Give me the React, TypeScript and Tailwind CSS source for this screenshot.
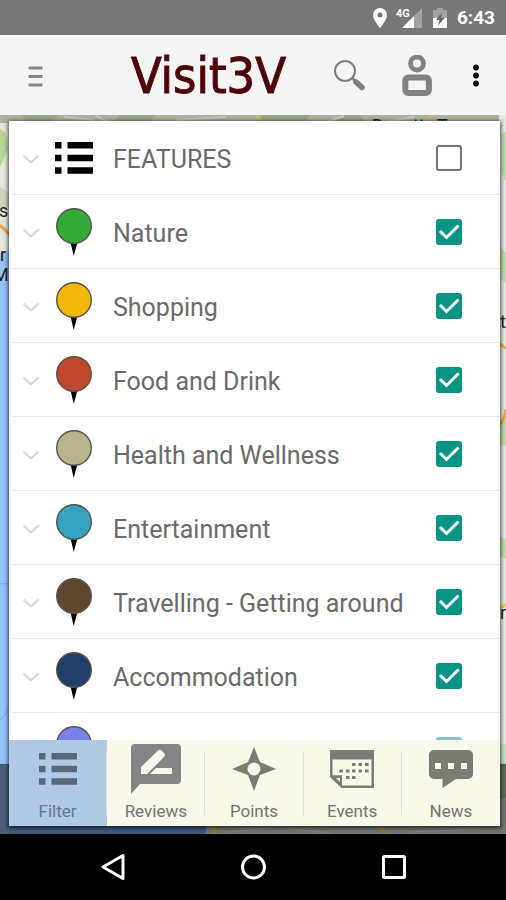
import { useState } from 'react';

type Category = {
  id: string;
  name: string;
  color?: string;
};

const categories: Category[] = [
  { id: 'features', name: 'FEATURES' },
  { id: 'nature', name: 'Nature', color: '#33a937' },
  { id: 'shopping', name: 'Shopping', color: '#f3b70c' },
  { id: 'food', name: 'Food and Drink', color: '#c0462d' },
  { id: 'health', name: 'Health and Wellness', color: '#b9b28f' },
  { id: 'entertainment', name: 'Entertainment', color: '#33a3c0' },
  { id: 'travelling', name: 'Travelling - Getting around', color: '#5f472d' },
  { id: 'accommodation', name: 'Accommodation', color: '#203e68' },
  { id: 'events', name: 'Events', color: '#7a80ea' },
];

const tabs = ['Filter', 'Reviews', 'Points', 'Events', 'News'];

function StatusBar() {
  return (
    <div className="flex h-9 shrink-0 items-center justify-end border-b border-white bg-[#777777] pr-[11px] text-white">
      <svg width="16" height="22" viewBox="0 0 16 22" className="mr-2">
        <path
          fillRule="evenodd"
          fill="#fff"
          d="M8 1a7 7 0 0 0-7 7c0 5 7 13 7 13s7-8 7-13a7 7 0 0 0-7-7zm0 4.5a2.5 2.5 0 1 1 0 5 2.5 2.5 0 0 1 0-5z"
        />
      </svg>
      <svg width="26" height="22" viewBox="0 0 26 22" className="mr-[10px]">
        <path d="M26 1V21H6z" fill="#a3a3a3" />
        <path d="M18 9V21H6z" fill="#fff" />
        <text x="0" y="10" fontSize="11" fontWeight="700" fill="#fff" fontFamily="Roboto, sans-serif">
          4G
        </text>
      </svg>
      <svg width="16" height="22" viewBox="0 0 16 22" className="mr-[9px]">
        <path d="M1 3h4V1h6v2h4v9H1z" fill="#a3a3a3" />
        <path d="M1 11h14v10H1z" fill="#fff" />
        <path d="M10.500 5L4 13h3.500L6 18.500 12.500 11H9z" fill="#666" />
      </svg>
      <span className="text-[19px] leading-6 font-bold">6:43</span>
    </div>
  );
}

function Header() {
  return (
    <header className="flex h-[79px] shrink-0 items-center gap-9 bg-[#f5f5f5] pr-[22px] pl-7">
      <button aria-label="Menu">
        <svg width="16" height="22" viewBox="0 0 16 22" fill="#858585">
          <path d="M0.500 1.500h14v3h-14zM0.500 10h14v3h-14zM0.500 18.500h14v3h-14z" />
        </svg>
      </button>
      <h1 className="mr-3 ml-auto font-['DejaVu_Sans_Condensed','DejaVu_Sans',sans-serif] text-[50px] leading-[60px] text-[#4f0507] [-webkit-text-stroke:1px_#4f0507]">
        Visit3V
      </h1>
      <button aria-label="Search">
        <svg width="32" height="32" viewBox="0 0 32 32" fill="none" stroke="#7d7d7d">
          <circle cx="11" cy="11" r="10" strokeWidth="2" />
          <path d="M18 18l5 5" strokeWidth="2.500" />
          <path d="M22 22l6 5.500" strokeWidth="5.500" strokeLinecap="round" />
        </svg>
      </button>
      <button aria-label="Profile">
        <svg width="30" height="42" viewBox="0 0 30 42" fill="none" stroke="#828282">
          <circle cx="15" cy="8.500" r="6.500" strokeWidth="4.800" />
          <rect x="3.300" y="22.500" width="23.600" height="15.400" rx="3" strokeWidth="6" />
        </svg>
      </button>
      <button aria-label="More options">
        <svg width="16" height="24" viewBox="0 0 16 24" fill="#000">
          <circle cx="8" cy="3.500" r="2.900" />
          <circle cx="8" cy="11.500" r="2.900" />
          <circle cx="8" cy="19.500" r="2.900" />
        </svg>
      </button>
    </header>
  );
}

function MapBackground() {
  return (
    <svg
      className="absolute inset-0 h-full w-full"
      viewBox="0 0 506 718"
      preserveAspectRatio="none"
      fontFamily="Roboto, sans-serif"
      fill="#222"
    >
      <rect width="506" height="718" fill="#dfe3d3" />
      {/* hills along the top */}
      <rect width="506" height="8" fill="#adb5a0" />
      <path d="M20 0h40l-12 8H30zM120 0h36l-8 8h-36zM260 0h50l-6 8h-40zM340 0h20l6 8h-30z" fill="#98a98a" />
      <path d="M64 2l30 3M96 1l12 6M176 5l50-3M326 7l18-6M384 7l30-5" stroke="#c9cdbf" strokeWidth="2" />
      <path d="M256 2h4M428 2h5" stroke="#d8b85a" strokeWidth="3" />
      {/* west coast */}
      <path d="M0 8h10v128H0z" fill="#e4e7da" />
      <path d="M0 14l6 4 2 16-8 18z" fill="#b4d795" />
      <path d="M0 72l10 6v14H0z" fill="#cdd6bd" />
      <path d="M0 110l10 10" stroke="#f0a14c" strokeWidth="3" />
      <path d="M0 138l10-3v514H0z" fill="#94c4fb" />
      <path d="M0 468h10M0 604q6-4 8-14" stroke="#7eabf0" fill="none" />
      {/* east side */}
      <path d="M499 0h7v648h-7z" fill="#e6e9df" />
      <path d="M501 20l5-4v50l-5-8zM499 130l7 8v30l-7-6zM499 305l7-5v30h-7zM499 420l7 4v20l-7-4z" fill="#bfdcad" />
      <path d="M499 228l7 5M499 310q6-6 7-16" stroke="#eda94d" strokeWidth="3" fill="none" />
      <path d="M499 493l7-4" stroke="#edcc55" strokeWidth="3" />
      <path d="M499 628h7v20h-7z" fill="#c5e3c4" />
      {/* dimmed strip under the panel */}
      <rect y="648" width="206" height="70" fill="#4c5e76" />
      <rect y="710" x="10" width="196" height="8" fill="#3f5a80" />
      <rect x="206" y="648" width="300" height="70" fill="#74736f" />
      <path d="M499 648h7v35h-7z" fill="#5b6a59" />
      <path d="M213 710l2 8M380 711l5 7" stroke="#9a7a25" strokeWidth="3" />
      <path d="M230 716l40-4M290 713l40 4M410 716l70-3" stroke="#86857f" />
      <text x="-1" y="102" fontSize="18">s</text>
      <text x="0" y="146" fontSize="18">r</text>
      <text x="-7" y="166" fontSize="18">Ma</text>
      <text x="500" y="213" fontSize="18">t</text>
      <text x="500" y="503" fontSize="18">n</text>
      <text x="372" y="17" fontSize="18">D</text>
      <text x="413" y="17" fontSize="18">tt</text>
      <text x="437" y="17" fontSize="18">T</text>
    </svg>
  );
}

function ListIcon({ color }: { color: string }) {
  return (
    <svg width="40" height="34" viewBox="0 0 40 34" fill={color}>
      <path d="M1 1h6.500v6.500H1zM13.500 1H39v6.500H13.500zM1 13.700h6.500v6.500H1zM13.500 13.700H39v6.500H13.500zM1 26.300h6.500v6.500H1zM13.500 26.300H39v6.500H13.500z" />
    </svg>
  );
}

function Pin({ color }: { color: string }) {
  return (
    <svg width="40" height="48" viewBox="0 0 40 48">
      <path d="M16.500 34h7L19.700 48z" fill="#000" />
      <circle cx="20" cy="18" r="17.300" fill={color} stroke="#54544e" strokeWidth="1.400" />
    </svg>
  );
}

type RowProps = {
  category: Category;
  checked: boolean;
  onToggle: () => void;
  faded: boolean;
};

function CategoryRow({ category, checked, onToggle, faded }: RowProps) {
  return (
    <li className="flex h-[74px] items-center gap-[14px] border-b border-[#e6e9e8] pr-[38px] pl-[10px]">
      <button aria-label={`Expand ${category.name}`}>
        <svg width="18" height="14" viewBox="0 0 18 14" fill="none" stroke="#d4d4d4" strokeWidth="1.800">
          <path d="M1.500 4.500L9 11.500l7.500-7" />
        </svg>
      </button>
      <label htmlFor={category.id} className="flex flex-1 items-center gap-[19px]">
        {category.color ? <Pin color={category.color} /> : <ListIcon color="#000" />}
        <span className="pt-1 text-[25px] leading-8 whitespace-nowrap text-[#6a6a6a]">{category.name}</span>
      </label>
      <span className={faded ? 'grid opacity-50' : 'grid'}>
        <input
          id={category.id}
          type="checkbox"
          checked={checked}
          onChange={onToggle}
          className="col-start-1 row-start-1 size-[26px] appearance-none rounded-[3px] border-2 border-[#737373] checked:border-[#079485] checked:bg-[#079485]"
        />
        {checked && (
          <svg
            className="pointer-events-none col-start-1 row-start-1"
            width="26"
            height="26"
            viewBox="0 0 26 26"
            fill="none"
            stroke="#fff"
            strokeWidth="3"
          >
            <path d="M4 12l6.500 6.500L22.500 6.500" />
          </svg>
        )}
      </span>
    </li>
  );
}

function TabIcon({ name }: { name: string }) {
  switch (name) {
    case 'Filter':
      return <ListIcon color="#57687a" />;
    case 'Reviews':
      return (
        <svg width="52" height="52" viewBox="0 0 52 52">
          <path d="M5 1h42a4 4 0 0 1 4 4v32a4 4 0 0 1-4 4H10L1 51V5a4 4 0 0 1 4-4z" fill="#848484" />
          <path d="M11 31v-7L28 7.500q2-1.500 4 .5l2 2q2 2 0 4L17 31zM20 31l6-6h16v6z" fill="#f8f9ea" />
        </svg>
      );
    case 'Points':
      return (
        <svg width="44" height="44" viewBox="0 0 44 44">
          <path d="M22 0l6 15 16 7-16 6-6 16-6-16-16-6 16-7z" fill="#7b7c74" />
          <circle cx="22" cy="22" r="6.500" fill="#f8f9ea" />
        </svg>
      );
    case 'Events':
      return (
        <svg width="46" height="40" viewBox="0 0 46 40">
          <path fillRule="evenodd" d="M1 1h44v38H12.500L1 28zM3.500 10.500v16H13v10h29.500v-26z" fill="#7b7c74" />
          <path d="M13 36V26.500H3.500z" fill="#7b7c74" />
          <path d="M7 29h4v4z" fill="#f8f9ea" />
          <path
            d="M23 14h3.500v3H23zM29.500 14H33v3h-3.500zM36 14h3.500v3H36zM10.500 20.500H14v3h-3.500zM17 20.500h3.500v3H17zM23 20.500h3.500v3H23zM29.500 20.500H33v3h-3.500zM36 20.500h3.500v3H36zM17 27h3.500v3H17zM23 27h3.500v3H23z"
            fill="#7b7c74"
          />
        </svg>
      );
    default:
      return (
        <svg width="46" height="40" viewBox="0 0 46 40">
          <path d="M6 1h34a5 5 0 0 1 5 5v19a5 5 0 0 1-5 5H28L14.500 39v-9H6a5 5 0 0 1-5-5V6a5 5 0 0 1 5-5z" fill="#7b7c74" />
          <path d="M7 14h6v6H7zM20 14h6v6h-6zM33 14h6v6h-6z" fill="#fbfcf2" />
        </svg>
      );
  }
}

function SystemNav() {
  return (
    <nav className="flex h-[66px] shrink-0 items-center justify-center gap-28 bg-black">
      <button aria-label="Back">
        <svg width="28" height="28" viewBox="0 0 28 28" fill="none" stroke="#fff" strokeWidth="3">
          <path d="M24 2.500v23L4 14z" strokeLinejoin="round" />
        </svg>
      </button>
      <button aria-label="Home">
        <svg width="28" height="28" viewBox="0 0 28 28" fill="none" stroke="#fff" strokeWidth="3">
          <circle cx="14.500" cy="14" r="11" />
        </svg>
      </button>
      <button aria-label="Recent apps">
        <svg width="28" height="28" viewBox="0 0 28 28" fill="none" stroke="#fff" strokeWidth="3">
          <rect x="4.500" y="3.500" width="21" height="21" rx="1" />
        </svg>
      </button>
    </nav>
  );
}

export default function App() {
  const [unchecked, setUnchecked] = useState<string[]>(['features']);
  const [activeTab, setActiveTab] = useState('Filter');

  const handleToggle = (id: string) => {
    setUnchecked((prev) => (prev.includes(id) ? prev.filter((item) => item !== id) : [...prev, id]));
  };

  return (
    <div className="flex h-screen flex-col overflow-hidden font-[Roboto,sans-serif]">
      <StatusBar />
      <Header />
      <main className="relative flex min-h-0 flex-1 flex-col overflow-hidden pt-[6px] pr-[6px] pb-2 pl-[9px]">
        <MapBackground />
        <section className="relative flex min-h-0 flex-1 flex-col bg-white shadow-[0_1px_4px_1px_rgba(0,0,0,0.7)]">
          <ul className="min-h-0 flex-1 overflow-hidden pl-[3px]">
            {categories.map((category) => (
              <CategoryRow
                key={category.id}
                category={category}
                checked={!unchecked.includes(category.id)}
                onToggle={() => handleToggle(category.id)}
                faded={category.id === 'events'}
              />
            ))}
          </ul>
          <div className="grid h-[86px] shrink-0 grid-cols-5 bg-[#f8f9ea]">
            {tabs.map((tab) => (
              <button
                key={tab}
                onClick={() => setActiveTab(tab)}
                className={
                  activeTab === tab
                    ? 'flex items-center bg-[#b0cae5] text-[#64788c]'
                    : 'flex items-center text-[#74756d]'
                }
              >
                <span className="flex flex-1 flex-col items-center">
                  <span className="flex h-14 items-center">
                    <TabIcon name={tab} />
                  </span>
                  <span className="text-[17px] leading-7">{tab}</span>
                </span>
                {tab !== 'News' && <span className="h-16 w-px bg-[#dfe1d6]" />}
              </button>
            ))}
          </div>
        </section>
      </main>
      <SystemNav />
    </div>
  );
}
